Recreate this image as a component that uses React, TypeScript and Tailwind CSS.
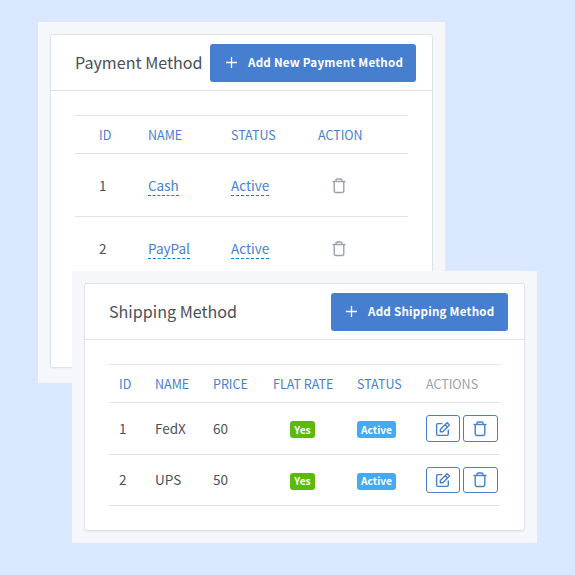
import type { ReactNode } from "react";

function TrashIcon() {
  return (
    <svg width="14" height="16" viewBox="0 0 14 16" fill="none" stroke="currentColor" className="block">
      <path d="M0.5 3.5H13.5" strokeWidth="1.4" />
      <path d="M4 3.4V2.4Q4 1 5.4 1H8.6Q10 1 10 2.4V3.4" strokeWidth="1.4" />
      <path d="M2.2 3.8V13.1Q2.2 14.5 3.6 14.5H10.4Q11.8 14.5 11.8 13.1V3.8" strokeWidth="1.4" />
    </svg>
  );
}

function EditIcon() {
  return (
    <svg width="16" height="16" viewBox="0 0 16 16" fill="none" stroke="currentColor" strokeWidth="1.4" className="block">
      <path d="M7.3 2.6H2.9Q1.6 2.6 1.6 3.9V13.1Q1.6 14.4 2.9 14.4H12Q13.3 14.4 13.3 13.1V8.6" />
      <path d="M5.3 10.7V8.5L12.1 1.7L14.5 4.1L7.8 10.7Z" strokeLinejoin="round" />
      <path d="M10.2 3.7L12.4 5.9" />
    </svg>
  );
}

function AddButton({ label, className }: { label: string; className: string }) {
  return (
    <button className={`flex h-[38px] shrink-0 items-center rounded-[3px] bg-[#467fcf] text-white ${className}`}>
      <svg width="11" height="11" viewBox="0 0 11 11" className="mr-[11px] block" stroke="currentColor" strokeWidth="1.3">
        <path d="M0 5.5H11M5.5 0V11" />
      </svg>
      <span className="pb-[2px] text-[11.6px] leading-[18px] font-bold tracking-[0.23px] whitespace-nowrap">{label}</span>
    </button>
  );
}

function Card({ title, action, className, children }: { title: string; action: ReactNode; className: string; children: ReactNode }) {
  return (
    <section className={`rounded-[3px] border border-[#dee2eb] bg-white shadow-[0_1px_2px_rgba(0,0,0,0.05)] ${className}`}>
      <header className="flex h-14 items-center justify-between border-b border-[#dee2eb] pr-4 pl-6">
        <h3 className="pb-[2px] text-[16.1px] leading-6 whitespace-nowrap">{title}</h3>
        {action}
      </header>
      <div className="px-6 pt-6">{children}</div>
    </section>
  );
}

const payments = [
  { id: 1, name: "Cash" },
  { id: 2, name: "PayPal" },
];
const shipping = [
  { id: 1, name: "FedX", price: 60, height: "h-[52px]", button: "h-[27px]", text: "leading-[19px]", badge: "mt-[2px]" },
  { id: 2, name: "UPS", price: 50, height: "h-[51px]", button: "h-[26px]", text: "pb-[2px] leading-[20px]", badge: "mt-[3px] pb-[2px]" },
];

const link = "block w-fit border-b border-dashed border-[#0088cc] pt-[1px] pb-[1px] -mb-[1px] leading-[18px] text-[#467fcf]";
const badge = "flex h-[17px] items-center justify-center rounded-[3px] text-[10.2px] leading-[15px] font-bold text-white";
const headRow = "h-[38px] text-[12.5px] leading-[19px] text-[#467fcf]";
const paymentGrid = "grid grid-cols-[49px_83px_87px_1fr] items-center pl-6 border-b border-[#dee2eb]";
const shippingGrid = "grid grid-cols-[36px_58px_60px_84px_69px_1fr] items-center pl-[10px] border-b border-[#dee2eb]";

export default function App() {
  return (
    <main className="relative h-[575px] w-[575px] overflow-hidden bg-[#d9e7ff] pt-[22px] pl-[38px] font-['Source_Sans_Pro','Noto_Sans_CJK_SC',sans-serif] text-[13.5px] text-[#495057]">
      <div className="h-[361px] w-[407px] bg-[#f5f7fb] p-3">
        <Card title="Payment Method" className="h-[334px]" action={<AddButton label="Add New Payment Method" className="w-[206px] pl-4" />}>
          <div className="border-t border-[#dee2eb]">
            <div className={`${paymentGrid} ${headRow}`}>
              <span>ID</span><span>NAME</span><span>STATUS</span><span>ACTION</span>
            </div>
            {payments.map((row) => (
              <div key={row.id} className={`${paymentGrid} h-[63px]`}>
                <span>{row.id}</span>
                <span><span className={link}>{row.name}</span></span>
                <span><span className={link}>Active</span></span>
                <span className="pt-[2px] pl-[14px] text-[#9aa0ac]"><TrashIcon /></span>
              </div>
            ))}
          </div>
        </Card>
      </div>

      <div className="absolute top-[271px] left-[72px] h-[272px] w-[465px] bg-[#f5f7fb] p-3">
        <Card title="Shipping Method" className="h-[248px]" action={<AddButton label="Add Shipping Method" className="w-[177px] pl-[15px]" />}>
          <div className="border-t border-[#dee2eb]">
            <div className={`${shippingGrid} ${headRow}`}>
              <span>ID</span><span>NAME</span><span>PRICE</span><span className="whitespace-nowrap">FLAT RATE</span><span>STATUS</span>
              <span className="text-[#9aa0ac]">ACTIONS</span>
            </div>
            {shipping.map((row) => (
              <div key={row.id} className={`${shippingGrid} ${row.height}`}>
                <span className={row.text}>{row.id}</span>
                <span className={row.text}>{row.name}</span>
                <span className={row.text}>{row.price}</span>
                <span className={`${badge} ${row.badge} ml-[17px] w-[25px] bg-[#5eba00]`}>Yes</span>
                <span className={`${badge} ${row.badge} w-[39px] bg-[#45aaf2]`}>Active</span>
                <span className="flex gap-[3px] text-[#467fcf]">
                  <button className={`flex w-[34px] items-center justify-center rounded-[3px] border border-[#467fcf] ${row.button}`}><EditIcon /></button>
                  <button className={`flex w-[35px] items-center justify-center rounded-[3px] border border-[#467fcf] pr-[1px] ${row.button}`}><TrashIcon /></button>
                </span>
              </div>
            ))}
          </div>
        </Card>
      </div>
    </main>
  );
}
